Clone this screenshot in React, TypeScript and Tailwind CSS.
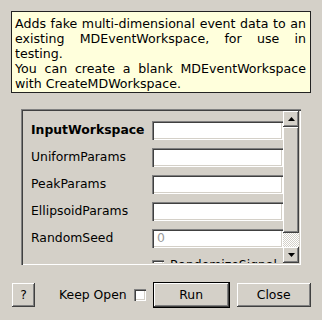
import React from 'react';

const raised =
  'shadow-[inset_-1px_-1px_#404040,inset_1px_1px_#ffffff,inset_-2px_-2px_#808080,inset_2px_2px_#d4d0c8]';
const sunken =
  'shadow-[inset_1px_1px_#808080,inset_2px_2px_#404040,inset_-1px_-1px_#ffffff,inset_-2px_-2px_#d4d0c8]';

const fields = [
  { name: 'InputWorkspace', bold: true, value: '' },
  { name: 'UniformParams', value: '' },
  { name: 'PeakParams', value: '' },
  { name: 'EllipsoidParams', value: '' },
  { name: 'RandomSeed', value: '0' },
];

function Arrow({ up }: { up?: boolean }) {
  return (
    <svg width="7" height="4" viewBox="0 0 7 4">
      <polygon points={up ? '3.5,0 7,4 0,4' : '0,0 7,0 3.5,4'} fill="#000" />
    </svg>
  );
}

export default function App() {
  return (
    <div className="w-[322px] h-[320px] bg-[#d4d0c8] overflow-hidden font-['DejaVu_Sans',sans-serif] text-[12.4px] text-black">
      {/* Description */}
      <div className="ml-[11px] mt-[11px] w-[300px] h-[82px] border border-[#222] bg-[#ffffdc] pl-[3px] pr-[4px] pt-[4px] leading-[15px] text-[12.6px]">
        <p className="text-justify">
          Adds fake multi-dimensional event data to an existing MDEventWorkspace, for use in testing.
        </p>
        <p className="text-justify">
          You can create a blank MDEventWorkspace with CreateMDWorkspace.
        </p>
      </div>

      {/* Properties panel */}
      <div className={`ml-[21px] mt-[16px] w-[280px] h-[156px] flex p-[2px] ${sunken}`}>
        <div className="flex-1 overflow-hidden flex flex-col gap-[8px] pt-[10px] pl-[8px]">
          {fields.map((f) => (
            <div key={f.name} className="flex items-center h-[19px] shrink-0">
              <span className={`w-[121px] shrink-0 ${f.bold ? 'font-bold' : ''}`}>{f.name}</span>
              <div className={`w-[131px] h-[19px] bg-white pl-[5px] flex items-center text-[#9a9a9a] ${sunken}`}>
                {f.value}
              </div>
            </div>
          ))}
          <div className="flex items-center h-[19px] shrink-0 pl-[121px] gap-[6px]">
            <div className={`w-[12px] h-[12px] bg-white ${sunken}`} />
            <span>RandomizeSignal</span>
          </div>
        </div>

        {/* Scrollbar */}
        <div className="w-[16px] flex flex-col shrink-0">
          <div className={`h-[16px] flex items-center justify-center ${raised}`}>
            <Arrow up />
          </div>
          <div className={`h-[106px] bg-[#d4d0c8] ${raised}`} />
          <div className="flex-1 bg-[repeating-conic-gradient(#ffffff_0_25%,#d4d0c8_0_50%)] bg-[length:2px_2px]" />
          <div className={`h-[16px] flex items-center justify-center ${raised}`}>
            <Arrow />
          </div>
        </div>
      </div>

      {/* Buttons */}
      <div className="flex items-center mt-[17px] h-[26px]">
        <button className={`ml-[12px] w-[23px] h-[24px] bg-[#d4d0c8] ${raised}`}>?</button>
        <span className="ml-[24px]">Keep Open</span>
        <div className={`ml-[7px] w-[12px] h-[12px] bg-white ${sunken}`} />
        <button className="ml-[7px] w-[77px] h-[26px] border border-black bg-[#d4d0c8]">
          <div className={`w-full h-full flex items-center justify-center ${raised}`}>Run</div>
        </button>
        <button className={`ml-[7px] w-[74px] h-[24px] bg-[#d4d0c8] ${raised}`}>Close</button>
      </div>
    </div>
  );
}
